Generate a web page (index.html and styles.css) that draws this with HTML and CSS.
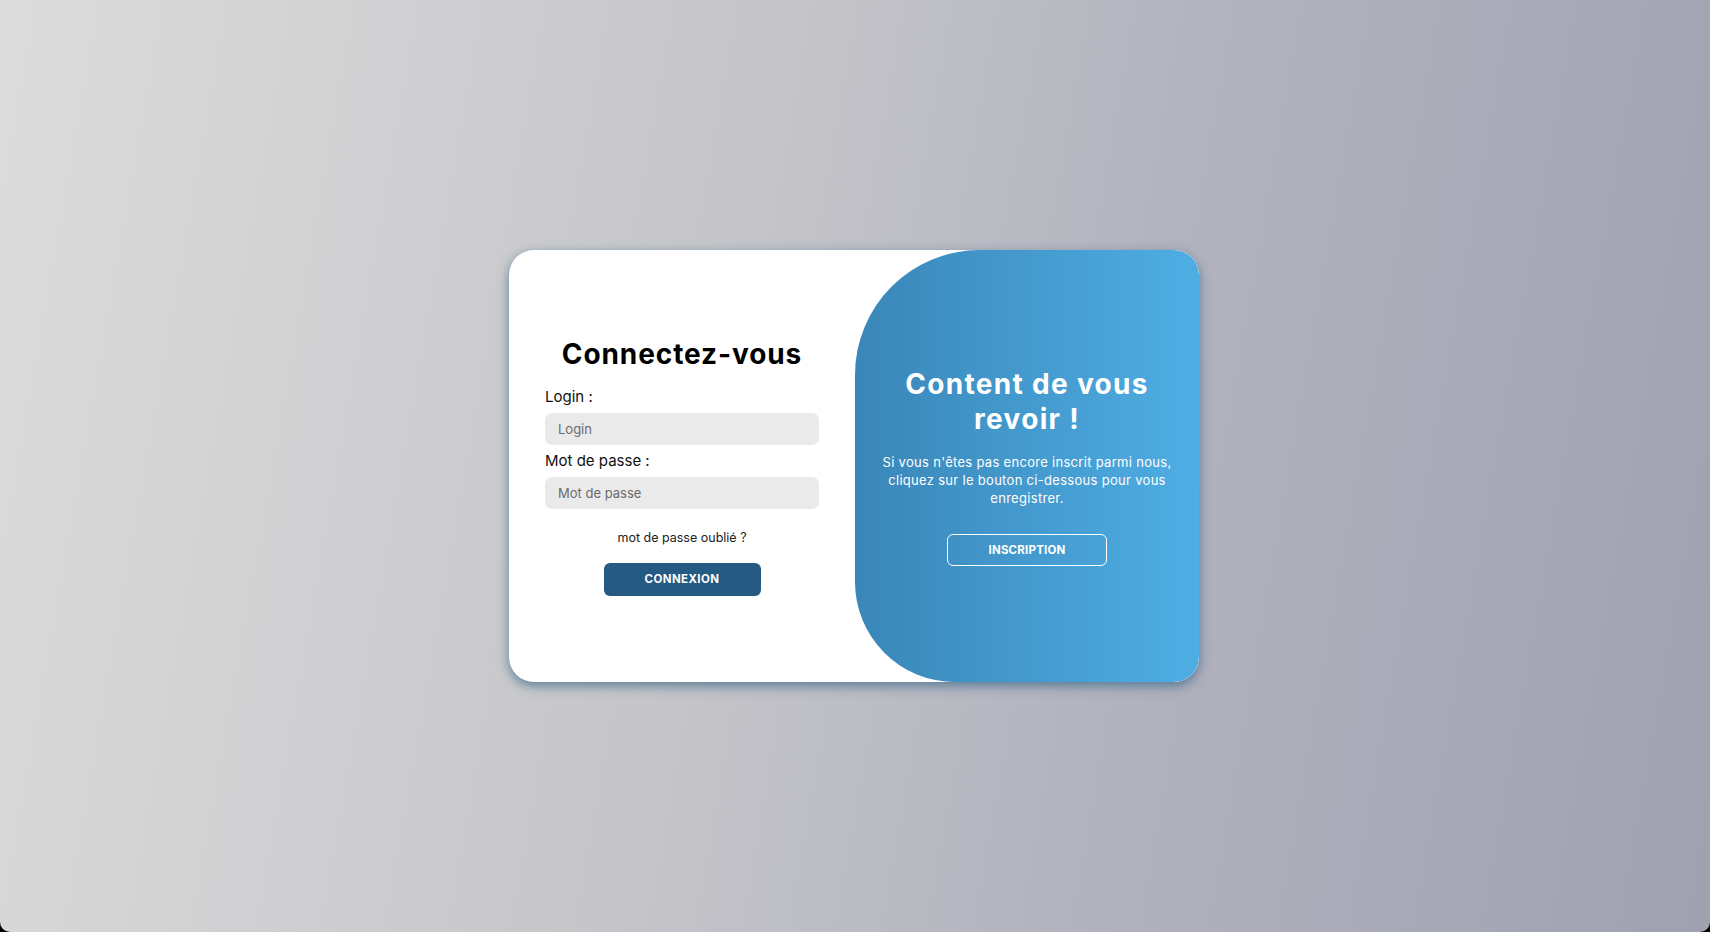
FILE: index.html
```html
<!doctype html>
<html lang="fr">
<head>
<meta charset="utf-8">
<meta name="viewport" content="width=device-width, initial-scale=1">
<title>Connexion</title>
<link rel="stylesheet" href="styles.css">
</head>
<body>

	<div class="page">

		<div class="card">

			<form class="login" onsubmit="return false;">

				<h1>Connectez-vous</h1>

				<label for="inpLogin">Login :</label>
				<input type="text" id="inpLogin" placeholder="Login" autofocus>

				<label for="inpPass">Mot de passe :</label>
				<input type="password" id="inpPass" placeholder="Mot de passe">

				<a class="forgot" href="#">mot de passe oublié ?</a>

				<button class="btnMain">CONNEXION</button>

			</form>

			<div class="welcome">

				<h1>Content de vous revoir !</h1>

				<p>Si vous n'êtes pas encore inscrit parmi nous, cliquez sur le bouton ci-dessous pour vous enregistrer.</p>

				<button class="btnGhost">INSCRIPTION</button>

			</div>

		</div>

	</div>

</body>
</html>
```

FILE: styles.css
```css
html { background: #000; }
body { font-family: "Inter", "Liberation Sans", sans-serif; margin: 0; }

.page { align-items: center; background: linear-gradient( 100deg, #dcdcdc 0%, #c6c6ca 40%, #b3b3bf 65%, #9fa1b0 100% ); border-radius: 0 0 10px 10px; display: flex; height: 932px; justify-content: center; }

.card { background: #fff; border-radius: 25px; box-shadow: 0 4px 12px rgba( 35, 90, 128, 0.65 ); display: flex; height: 432px; margin-left: -2px; overflow: hidden; width: 690px; }

.login { align-items: center; box-sizing: border-box; display: flex; flex: 0 0 346px; flex-direction: column; justify-content: center; padding: 0 36px; }
.login h1 { color: #000; font-size: 28px; font-weight: 700; letter-spacing: 0.9px; margin: 0 0 16px; }
.login label { align-self: stretch; color: #111; font-size: 15px; margin-bottom: 7px; }
.login input { background: #eaeaea; border: none; border-radius: 7px; box-sizing: border-box; caret-color: #000; color: #333; font: 13px "Inter", "Liberation Sans", sans-serif; height: 32px; margin-bottom: 6px; outline: none; padding: 0 13px; width: 100%; }
.login input::placeholder { color: #6b6b6b; }

.forgot { color: #222; font-size: 12.5px; margin: 15px 0 18px; text-decoration: none; }

.btnMain { background: #255b82; border: none; border-radius: 6px; color: #fff; cursor: pointer; font: 700 11.5px "Inter", "Liberation Sans", sans-serif; height: 33px; letter-spacing: 0.4px; width: 157px; }

.welcome { align-items: center; background: linear-gradient( to right, #3a86b8, #4eaee4 ); border-radius: 125px 25px 25px 100px; color: #fff; display: flex; flex: 1; flex-direction: column; justify-content: center; padding: 0 22px; text-align: center; }
.welcome h1 { font-size: 28px; font-weight: 700; letter-spacing: 1.3px; line-height: 35px; margin: 0 0 16px; padding: 0 20px; }
.welcome p { font-size: 13px; letter-spacing: 0.3px; line-height: 18px; margin: 0 0 27px; }

.btnGhost { background: transparent; border: 1px solid #fff; border-radius: 6px; color: #fff; cursor: pointer; font: 700 11.5px "Inter", "Liberation Sans", sans-serif; height: 32px; letter-spacing: 0.2px; width: 160px; }
```
